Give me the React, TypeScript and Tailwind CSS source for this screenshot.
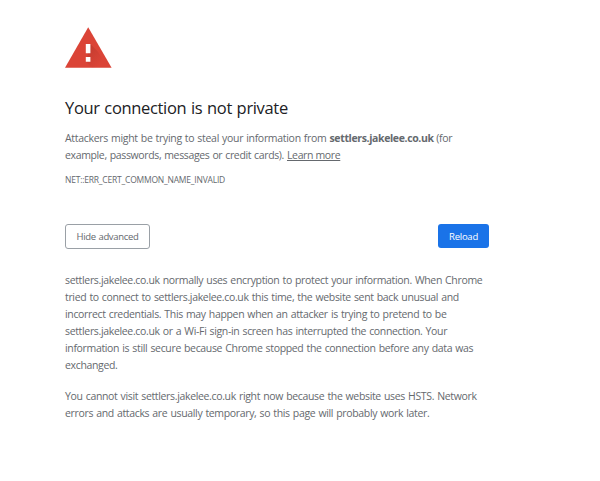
const WarningIcon = () => (
  <svg className="block h-[41px] w-[47px]" viewBox="0 0 47 41">
    <defs>
      <linearGradient id="shadow" x1="22" y1="22" x2="36" y2="36" gradientUnits="userSpaceOnUse">
        <stop offset="0" stopColor="#b23529" stopOpacity="0.55" />
        <stop offset="1" stopColor="#b23529" stopOpacity="0" />
      </linearGradient>
    </defs>
    <path d="M23.2 0.3 46.6 40.8H0Z" fill="#db4437" />
    <path d="M25.3 17 33 24.7 42.5 40.8H27L21 34.8Z" fill="url(#shadow)" />
    <path d="M20.8 17h4.6v9.2h-4.6zM20.8 30h4.6v4.8h-4.6z" fill="#fff" />
  </svg>
);

const details = [
  "settlers.jakelee.co.uk normally uses encryption to protect your information. When Chrome",
  "tried to connect to settlers.jakelee.co.uk this time, the website sent back unusual and",
  "incorrect credentials. This may happen when an attacker is trying to pretend to be",
  "settlers.jakelee.co.uk or a Wi-Fi sign-in screen has interrupted the connection. Your",
  "information is still secure because Chrome stopped the connection before any data was",
  "exchanged.",
];

const hstsNotice = [
  "You cannot visit settlers.jakelee.co.uk right now because the website uses HSTS. Network",
  "errors and attacks are usually temporary, so this page will probably work later.",
];

const Paragraph = ({ lines }: { lines: string[] }) => (
  <p>
    {lines.map((line) => (
      <span key={line} className="block whitespace-nowrap">
        {line}
      </span>
    ))}
  </p>
);

const App = () => {
  return (
    <main className="h-[481px] overflow-hidden bg-white pt-[27px] pl-[65px] font-['Open_Sans','Noto_Sans',sans-serif] text-[10.5px] leading-[17px] tracking-[-0.25px] text-[#65696e]">
      <div className="w-[424px]">
        <WarningIcon />
        <h1 className="mt-[28px] text-[16.5px] leading-6 tracking-[-0.34px] [word-spacing:0.75px] whitespace-nowrap text-[#202124]">
          Your connection is not private
        </h1>
        <p className="mt-[10px] whitespace-nowrap">
          <span className="tracking-[-0.3px] [word-spacing:0.6px]">
            Attackers might be trying to steal your information from{" "}
          </span>
          <strong className="font-bold tracking-[-0.36px]">settlers.jakelee.co.uk</strong> (for
          <br />
          <span className="tracking-[-0.36px] [word-spacing:0.6px]">
            example, passwords, messages or credit cards).{" "}
          </span>
          <a href="#" className="tracking-[-0.36px] underline">
            Learn more
          </a>
        </p>
        <div className="mt-[8px] text-[8.5px] leading-[16px] tracking-[-0.21px] whitespace-nowrap">
          NET::ERR_CERT_COMMON_NAME_INVALID
        </div>
        <div className="mt-[36px] flex items-start justify-between">
          <button className="h-[25px] w-[85px] rounded-[3px] border border-[#9aa0a6] text-[9.5px] leading-[23px] tracking-[-0.33px] [word-spacing:0.5px]">
            Hide advanced
          </button>
          <button className="h-6 w-[51px] rounded-[3px] bg-[#1a73e8] pt-px text-[9.5px] leading-[23px] text-white">
            Reload
          </button>
        </div>
        <div className="mt-[23px] space-y-[14px] tracking-[-0.34px] [word-spacing:0.7px]">
          <Paragraph lines={details} />
          <Paragraph lines={hstsNotice} />
        </div>
      </div>
    </main>
  );
};

export default App;
